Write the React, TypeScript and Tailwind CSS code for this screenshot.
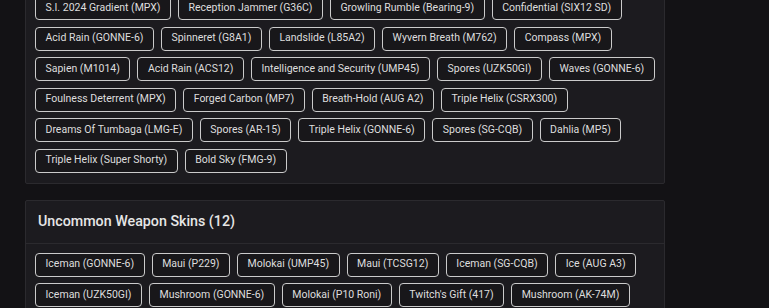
const rareRows: string[][] = [
  ['S.I. 2024 Gradient (MPX)', 'Reception Jammer (G36C)', 'Growling Rumble (Bearing-9)', 'Confidential (SIX12 SD)'],
  ['Acid Rain (GONNE-6)', 'Spinneret (G8A1)', 'Landslide (L85A2)', 'Wyvern Breath (M762)', 'Compass (MPX)'],
  ['Sapien (M1014)', 'Acid Rain (ACS12)', 'Intelligence and Security (UMP45)', 'Spores (UZK50GI)', 'Waves (GONNE-6)'],
  ['Foulness Deterrent (MPX)', 'Forged Carbon (MP7)', 'Breath-Hold (AUG A2)', 'Triple Helix (CSRX300)'],
  ['Dreams Of Tumbaga (LMG-E)', 'Spores (AR-15)', 'Triple Helix (GONNE-6)', 'Spores (SG-CQB)', 'Dahlia (MP5)'],
  ['Triple Helix (Super Shorty)', 'Bold Sky (FMG-9)'],
]

const uncommonRows: string[][] = [
  ['Iceman (GONNE-6)', 'Maui (P229)', 'Molokai (UMP45)', 'Maui (TCSG12)', 'Iceman (SG-CQB)', 'Ice (AUG A3)'],
  ['Iceman (UZK50GI)', 'Mushroom (GONNE-6)', 'Molokai (P10 Roni)', "Twitch's Gift (417)", 'Mushroom (AK-74M)'],
]

function Chip({ label }: { label: string }) {
  return (
    <span className="inline-flex items-center h-6 px-[9.5px] rounded-[4px] border border-[#cbcbcb] bg-[#18171a] text-[10.5px] leading-none text-[#dedede] whitespace-nowrap">
      {label}
    </span>
  )
}

function ChipRows({ rows }: { rows: string[][] }) {
  return (
    <div className="flex flex-col gap-y-[6.5px]">
      {rows.map((row, i) => (
        <div key={i} className="flex gap-x-[7px]">
          {row.map(label => <Chip key={label} label={label} />)}
        </div>
      ))}
    </div>
  )
}

export default function App() {
  return (
    <div
      className="min-h-screen bg-[#131215] overflow-hidden"
      style={{ fontFamily: 'Roboto, "Liberation Sans", sans-serif' }}
    >
      <div className="w-[640px] ml-[25px] -mt-[15px] flex flex-col gap-4">
        {/* Rare skins (header scrolled out of view) */}
        <div className="rounded-[2px] border border-[#2b2a2e] bg-[#1c1b1f] px-[9px] pt-[10px] pb-[10px]">
          <ChipRows rows={rareRows} />
        </div>

        {/* Uncommon skins */}
        <div className="rounded-[2px] border border-[#2b2a2e] bg-[#1c1b1f]">
          <div className="h-[43px] flex items-center px-3 border-b border-[#2b2a2e]">
            <h3 className="text-[14.25px] font-medium text-[#e6e6e6]">Uncommon Weapon Skins (12)</h3>
          </div>
          <div className="px-[9px] pt-[9px] pb-[10px]">
            <ChipRows rows={uncommonRows} />
          </div>
        </div>
      </div>
    </div>
  )
}
